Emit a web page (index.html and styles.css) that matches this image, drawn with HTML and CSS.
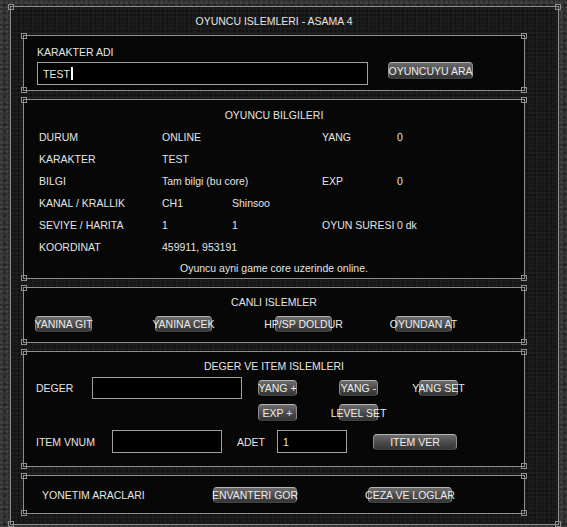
FILE: index.html
```html
<!DOCTYPE html>
<html lang="tr">
<head>
<meta charset="utf-8">
<title>Oyuncu Islemleri</title>
<link rel="stylesheet" href="styles.css">
</head>
<body>
<div class="board frame">
  <div class="board-title">OYUNCU ISLEMLERI - ASAMA 4</div>
  <div class="panels">
    <section class="panel frame p-search">
      <div class="label">KARAKTER ADI</div>
      <div class="search-row">
        <div class="field field-name">TEST<span class="caret"></span></div>
        <button class="btn btn-wide">OYUNCUYU ARA</button>
      </div>
    </section>

    <section class="panel frame p-info">
      <div class="panel-title">OYUNCU BILGILERI</div>
      <div class="info-grid">
        <span>DURUM</span><span>ONLINE</span><span></span><span>YANG</span><span>0</span>
        <span>KARAKTER</span><span>TEST</span><span></span><span></span><span></span>
        <span>BILGI</span><span>Tam bilgi (bu core)</span><span></span><span>EXP</span><span>0</span>
        <span>KANAL / KRALLIK</span><span>CH1</span><span>Shinsoo</span><span></span><span></span>
        <span>SEVIYE / HARITA</span><span>1</span><span>1</span><span>OYUN SURESI</span><span>0 dk</span>
        <span>KOORDINAT</span><span>459911, 953191</span><span></span><span></span><span></span>
      </div>
      <div class="info-foot">Oyuncu ayni game core uzerinde online.</div>
    </section>

    <section class="panel frame p-live">
      <div class="panel-title">CANLI ISLEMLER</div>
      <div class="live-row">
        <button class="btn btn-mid">YANINA GIT</button>
        <button class="btn btn-mid">YANINA CEK</button>
        <button class="btn btn-mid">HP/SP DOLDUR</button>
        <button class="btn btn-mid">OYUNDAN AT</button>
      </div>
    </section>

    <section class="panel frame p-value">
      <div class="panel-title">DEGER VE ITEM ISLEMLERI</div>
      <div class="value-grid">
        <span class="label">DEGER</span>
        <input class="field field-deger" type="text" value="">
        <button class="btn btn-small">YANG +</button>
        <button class="btn btn-small">YANG -</button>
        <button class="btn btn-small">YANG SET</button>
        <span></span>
        <span></span>
        <button class="btn btn-small btn-row2">EXP +</button>
        <button class="btn btn-small btn-row2">LEVEL SET</button>
        <span></span>
      </div>
      <div class="item-row">
        <span class="label label-vnum">ITEM VNUM</span>
        <input class="field field-vnum" type="text" value="">
        <span class="label label-adet">ADET</span>
        <input class="field field-adet" type="text" value="1">
        <button class="btn btn-wide">ITEM VER</button>
      </div>
    </section>

    <section class="panel frame p-admin">
      <span class="label label-admin">YONETIM ARACLARI</span>
      <button class="btn btn-wide">ENVANTERI GOR</button>
      <button class="btn btn-wide btn-ceza">CEZA VE LOGLAR</button>
    </section>
  </div>
</div>
</body>
</html>
```

FILE: styles.css
```css
html, body {
  margin: 0;
  padding: 0;
}

body {
  width: 567px;
  height: 527px;
  overflow: hidden;
  background-color: #2e2e2e;
  background-image:
    radial-gradient(circle at 30% 40%, rgba(255,255,255,0.08) 0 1px, transparent 2px),
    radial-gradient(circle at 70% 80%, rgba(0,0,0,0.35) 0 1px, transparent 2px),
    radial-gradient(circle at 20% 90%, rgba(255,255,255,0.05) 0 1px, transparent 2px);
  background-size: 5px 5px, 7px 7px, 3px 4px;
  font-family: "Liberation Sans", Arial, sans-serif;
  font-size: 10.5px;
  color: #e4e4e4;
  --ln: #8e8e8e;
}

.frame {
  position: relative;
  border: 1px solid var(--ln);
}

.frame::before,
.frame::after {
  content: "";
  position: absolute;
  left: -3px;
  right: -3px;
  height: 6px;
  pointer-events: none;
  background:
    linear-gradient(var(--ln), var(--ln)) 0 0 / 6px 1px no-repeat,
    linear-gradient(var(--ln), var(--ln)) 0 100% / 6px 1px no-repeat,
    linear-gradient(var(--ln), var(--ln)) 0 0 / 1px 6px no-repeat,
    linear-gradient(var(--ln), var(--ln)) 5px 0 / 1px 6px no-repeat,
    linear-gradient(var(--ln), var(--ln)) 100% 0 / 6px 1px no-repeat,
    linear-gradient(var(--ln), var(--ln)) 100% 100% / 6px 1px no-repeat,
    linear-gradient(var(--ln), var(--ln)) 100% 0 / 1px 6px no-repeat,
    linear-gradient(var(--ln), var(--ln)) calc(100% - 5px) 0 / 1px 6px no-repeat;
}

.frame::before { top: -3px; }
.frame::after { bottom: -3px; }

.board {
  box-sizing: border-box;
  width: 549px;
  margin: 6px 0 0 10px;
  padding: 7px 33px 10px 12px;
  background-color: #161616;
  background-image:
    radial-gradient(circle at 50% 50%, rgba(255,255,255,0.045) 0 1px, transparent 2px),
    radial-gradient(circle at 20% 70%, rgba(0,0,0,0.3) 0 1px, transparent 2px);
  background-size: 4px 4px, 6px 5px;
}

.board-title {
  height: 14px;
  line-height: 14px;
  text-align: center;
  margin-bottom: 7px;
}

.panels {
  display: flex;
  flex-direction: column;
  gap: 8px;
}

.panel {
  background: #070707;
}

.label {
  white-space: nowrap;
}

/* generic buttons */
.btn {
  box-sizing: border-box;
  display: flex;
  align-items: center;
  justify-content: center;
  height: 16px;
  padding: 0;
  margin: 0;
  overflow: visible;
  white-space: nowrap;
  font: inherit;
  color: #ececec;
  border: 1px solid #8a8a8a;
  border-top-color: #b4b4b4;
  border-bottom-color: #444;
  border-radius: 4px;
  background: linear-gradient(#6c6c6c, #4a4a4a 55%, #353535);
  box-shadow: 0 1px 0 #000;
}

.btn-wide { width: 84px; }
.btn-mid { width: 57px; }
.btn-small { width: 39px; }

/* inputs */
.field {
  box-sizing: border-box;
  height: 23px;
  margin: 0;
  padding: 0 0 0 5px;
  background: #000;
  border: 1px solid #a0a0a0;
  border-radius: 0;
  color: #e6e6e6;
  font: inherit;
  outline: none;
}

/* panel 1 */
.p-search {
  padding: 9px 0 5px 13px;
}

.p-search .label {
  height: 14px;
  line-height: 14px;
  margin-bottom: 3px;
}

.search-row {
  display: flex;
  align-items: flex-start;
  gap: 20px;
}

.field-name {
  display: flex;
  align-items: center;
  width: 331px;
}

.caret {
  display: inline-block;
  width: 2px;
  height: 13px;
  margin-left: 1px;
  background: #fff;
}

.p-search .btn-wide {
  width: 85px;
  height: 17px;
}

/* panel 2 */
.p-info {
  padding: 4px 0 0 15px;
}

.panel-title {
  text-align: center;
  white-space: nowrap;
}

.p-info .panel-title {
  height: 22px;
  line-height: 22px;
  margin-left: -15px;
}

.info-grid {
  display: grid;
  grid-template-columns: 123px 70px 90px 75px 1fr;
  grid-auto-rows: 22px;
  align-items: center;
  white-space: nowrap;
}

.info-foot {
  height: 20px;
  line-height: 20px;
  text-align: center;
  margin-left: -15px;
}

/* panel 3 */
.p-live {
  padding: 7px 0 10px 11px;
}

.p-live .panel-title {
  height: 14px;
  line-height: 14px;
  margin: 0 0 7px -11px;
}

.live-row {
  display: flex;
  gap: 63px;
}

/* panel 4 */
.p-value {
  padding: 7px 0 13px 12px;
}

.p-value .panel-title {
  height: 14px;
  line-height: 14px;
  margin: 0 0 4px -12px;
}

.value-grid {
  display: grid;
  grid-template-columns: 56px 166px 81px 80px 39px;
  grid-template-rows: 22px 17px;
  row-gap: 5px;
  align-items: center;
}

.field-deger {
  width: 150px;
  height: 22px;
}

.btn-row2 {
  height: 17px;
}

.item-row {
  display: flex;
  align-items: center;
  margin-top: 9px;
}

.label-vnum { width: 76px; }

.field-vnum {
  width: 110px;
}

.label-adet {
  width: 40px;
  margin-left: 15px;
}

.field-adet {
  width: 70px;
}

.item-row .btn-wide {
  margin-left: 26px;
}

/* panel 5 */
.p-admin {
  display: flex;
  align-items: center;
  padding: 11px 0 10px 18px;
}

.label-admin {
  width: 171px;
}

.btn-ceza {
  margin-left: 71px;
}
```
